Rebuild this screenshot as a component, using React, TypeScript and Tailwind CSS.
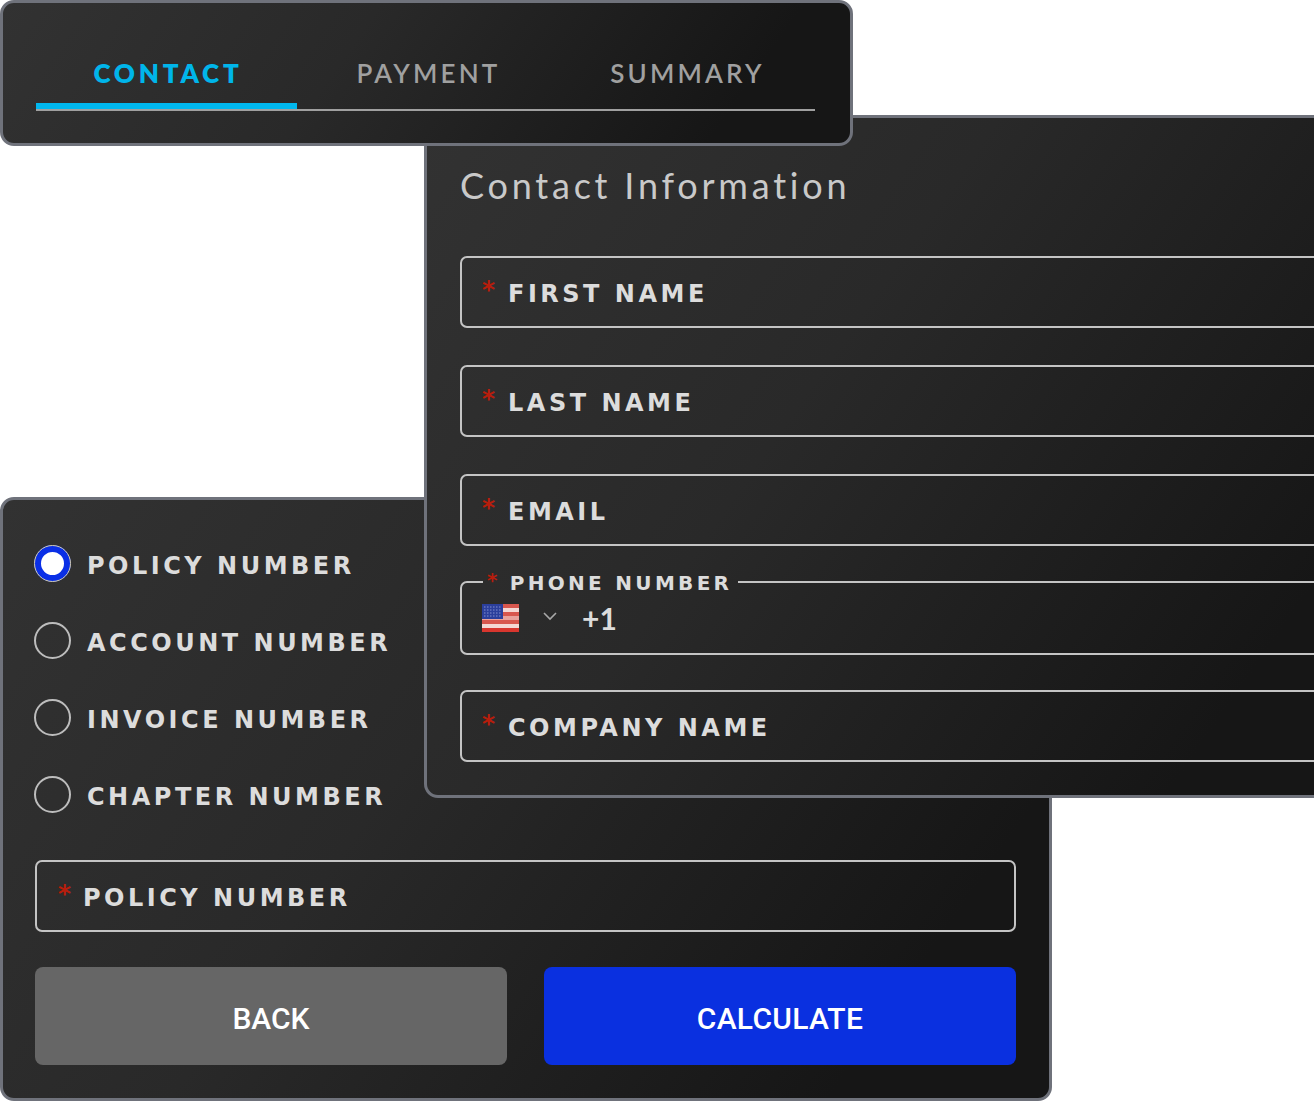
const panel =
  "absolute border-[3px] border-[#6f727b] bg-[linear-gradient(125deg,#323232_0%,#292929_40%,#161616_85%)]";
const labelFont = "font-['DejaVu_Sans',sans-serif] font-bold tracking-[0.146em] text-[#dcdcdc]";

function Asterisk({ className = "" }: { className?: string }) {
  return <span className={`block font-['DejaVu_Sans',sans-serif] font-bold leading-none text-[#b81d0c] ${className}`}>*</span>;
}

function Field({ label, className = "" }: { label: string; className?: string }) {
  return (
    <div className={`flex h-[72px] items-center rounded-[7px] border-2 border-[#c4c4c4] pl-[20px] ${className}`}>
      <span className="mb-[5px] w-[26px]"><Asterisk className="text-[25px]" /></span>
      <span className={`${labelFont} mt-[4px] text-[24px] leading-none`}>{label}</span>
    </div>
  );
}

function Flag() {
  const stripes = [0, 2, 4, 6];
  return (
    <svg width="37" height="28" viewBox="0 0 37 28" className="block">
      <rect width="37" height="28" fill="#f4d8d4" />
      {stripes.map((i) => (
        <rect key={i} y={i * 4} width="37" height="4" fill="#d8574e" />
      ))}
      <rect y="24" width="37" height="4" fill="#d8362e" />
      <rect y="12" width="37" height="4" fill="#e9a29c" />
      <rect width="21" height="15" fill="#2b3f9c" />
      <path d="M2 3h17M2 6h17M2 9h17M2 12h17" stroke="#8590cf" strokeWidth="1" strokeDasharray="1.5 1.5" />
    </svg>
  );
}

function Radio({ label, checked = false }: { label: string; checked?: boolean }) {
  return (
    <div className="flex h-[37px] items-center gap-[16px]">
      {checked ? (
        <span className="block size-[37px] rounded-full border-[7px] border-[#0a2fe6] bg-white outline outline-1 -outline-offset-1 outline-[#d8cfa8]" />
      ) : (
        <span className="block size-[37px] rounded-full border-2 border-[#bdbdbd]" />
      )}
      <span className={`${labelFont} mt-[4px] text-[24px] leading-none`}>{label}</span>
    </div>
  );
}

function Tab({ label, active = false }: { label: string; active?: boolean }) {
  return (
    <div className={`relative flex h-[72px] items-center justify-center ${active ? "w-[261px] pl-[3px]" : "flex-1 pl-[4px]"}`}>
      <span
        className={`font-['Lato',sans-serif] text-[26px] leading-none ${
          active ? "font-extrabold tracking-[0.145em] text-[#00b5ea]" : "font-semibold tracking-[0.122em] text-[#a0a0a0]"
        }`}
      >
        {label}
      </span>
      {active && <span className="absolute bottom-0 left-0 h-[6px] w-full bg-[#00b7ee]" />}
    </div>
  );
}

export default function App() {
  return (
    <div className="relative h-[1101px] w-[1314px] overflow-hidden bg-white">
      {/* Policy window */}
      <div className={`${panel} left-0 top-[497px] flex h-[604px] w-[1052px] flex-col rounded-[14px] pl-[32px] pr-[33px] pt-[45px]`}>
        <div className="-ml-[1px] flex flex-col gap-[40px]">
          <Radio label="POLICY NUMBER" checked />
          <Radio label="ACCOUNT NUMBER" />
          <Radio label="INVOICE NUMBER" />
          <Radio label="CHAPTER NUMBER" />
        </div>
        <div className="mt-[47px] flex h-[72px] items-center rounded-[7px] border-2 border-[#c4c4c4] pl-[21px]">
          <span className="mb-[5px] w-[25px]"><Asterisk className="text-[25px]" /></span>
          <span className={`${labelFont} mt-[4px] text-[24px] leading-none`}>POLICY NUMBER</span>
        </div>
        <div className="mt-[35px] flex gap-[37px]">
          <button className="flex h-[98px] w-[472px] items-center justify-center rounded-[8px] bg-[#666666] pt-[4px] font-['Roboto',sans-serif] text-[30px] font-medium text-white">
            BACK
          </button>
          <button className="flex h-[98px] w-[472px] items-center justify-center rounded-[8px] bg-[#0a30e0] pt-[4px] font-['Roboto',sans-serif] text-[30px] font-medium tracking-[0.01em] text-white">
            CALCULATE
          </button>
        </div>
      </div>

      {/* Contact window */}
      <div className={`${panel} left-[424px] top-[115px] h-[683px] w-[960px] rounded-[14px] pl-[33px] pr-[33px]`}>
        <h2 className="mt-[49px] font-['Lato',sans-serif] text-[36px] font-normal leading-none tracking-[0.105em] text-[#c9c9c9]">
          Contact Information
        </h2>
        <div className="mt-[53px] flex flex-col">
          <Field label="FIRST NAME" />
          <Field label="LAST NAME" className="mt-[37px]" />
          <Field label="EMAIL" className="mt-[37px]" />
          <fieldset className="mt-[24px] h-[85px] rounded-[7px] border-2 border-[#c4c4c4] pl-[20px]">
            <legend className="ml-[1px] flex h-[24px] items-center pr-[6px] font-['DejaVu_Sans',sans-serif] text-[20px] font-bold leading-none tracking-[0.165em] text-[#dcdcdc]">
              <Asterisk className="mb-[4px] ml-[4px] mr-[9px] text-[20px]" />
              <span className="mt-[2px]">PHONE NUMBER</span>
            </legend>
            <div className="flex h-[48px] items-center">
              <Flag />
              <svg width="16" height="10" viewBox="0 0 16 10" className="mb-[4px] ml-[23px]">
                <path d="M2 2l6 6 6-6" fill="none" stroke="#a8a8a8" strokeWidth="1.6" />
              </svg>
              <span className="ml-[24px] font-['Lato',sans-serif] text-[30px] font-bold leading-none text-[#dcdcdc]">+1</span>
            </div>
          </fieldset>
          <Field label="COMPANY NAME" className="mt-[35px]" />
        </div>
      </div>

      {/* Tabs window */}
      <div className={`${panel} left-0 top-0 h-[146px] w-[853px] rounded-[14px] pl-[33px] pt-[34px]`}>
        <div className="flex w-[779px] border-b-2 border-[#a0a0a0]">
          <Tab label="CONTACT" active />
          <Tab label="PAYMENT" />
          <Tab label="SUMMARY" />
        </div>
      </div>
    </div>
  );
}
